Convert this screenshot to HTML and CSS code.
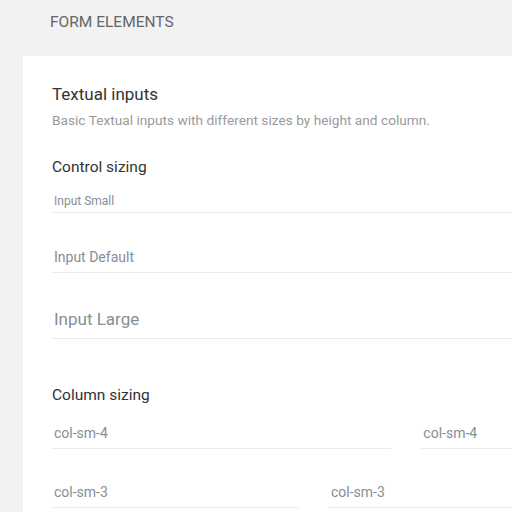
FILE: index.html
```html
<!DOCTYPE html>
<html>
<head>
<meta charset="utf-8">
<link rel="stylesheet" href="styles.css">
</head>
<body>
<div class="page-title">FORM ELEMENTS</div>
<div class="card">
  <h4 class="card-title">Textual inputs</h4>
  <p class="card-sub">Basic Textual inputs with different sizes by height and column.</p>
  <h5 class="section-title">Control sizing</h5>
  <div class="field field-sm">Input Small</div>
  <div class="field field-md gap">Input Default</div>
  <div class="field field-lg gap-lg">Input Large</div>
  <h5 class="section-title section-col">Column sizing</h5>
  <div class="row row-3 row-first">
    <div class="field field-md">col-sm-4</div>
    <div class="field field-md">col-sm-4</div>
    <div class="field field-md">col-sm-4</div>
  </div>
  <div class="row row-4 row-next">
    <div class="field field-md">col-sm-3</div>
    <div class="field field-md">col-sm-3</div>
    <div class="field field-md">col-sm-3</div>
    <div class="field field-md">col-sm-3</div>
  </div>
</div>
</body>
</html>
```
FILE: styles.css
```css
html { overflow: hidden; }
body {
  margin: 0;
  background: #f2f2f2;
  font-family: Roboto, "Liberation Sans", sans-serif;
  width: 1300px;
}
.page-title {
  height: 56px;
  box-sizing: border-box;
  padding: 12px 0 0 50px;
  font-size: 15.5px;
  line-height: 20px;
  color: #666;
}
.card {
  margin-left: 23px;
  background: #fff;
  padding: 28px 29px 40px;
  width: 1160px;
}
.card-title {
  margin: 0;
  font-size: 17px;
  line-height: 20px;
  font-weight: 400;
  color: #333;
}
.card-sub {
  margin: 7px 0 0;
  font-size: 13.7px;
  line-height: 18px;
  color: #9a9a9a;
}
.section-title {
  margin: 27.5px 0 0;
  font-size: 15.5px;
  line-height: 20px;
  font-weight: 400;
  color: #333;
}
.section-col { margin-top: 45.5px; }
.field {
  border-bottom: 1px solid #e9ecef;
  color: #868e96;
  padding-left: 2px;
}
.field-sm {
  margin-top: 12.5px;
  padding-top: 4px;
  padding-bottom: 3px;
  font-size: 12px;
  line-height: 16px;
}
.field-md {
  padding-top: 6px;
  padding-bottom: 5px;
  font-size: 14px;
  line-height: 20px;
}
.field-lg {
  padding-top: 8px;
  padding-bottom: 7px;
  font-size: 17px;
  line-height: 24px;
}
.gap { margin-top: 28px; }
.gap-lg { margin-top: 26px; }
.row {
  display: grid;
  column-gap: 30px;
  width: 1078px;
}
.row-3 { grid-template-columns: repeat(3, 1fr); }
.row-4 { grid-template-columns: repeat(4, 1fr); }
.row-first { margin-top: 12.5px; }
.row-next { margin-top: 27px; }
```
